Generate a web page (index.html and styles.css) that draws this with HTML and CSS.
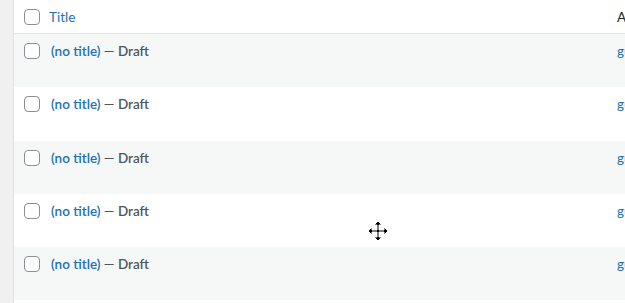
FILE: index.html
```html
<!DOCTYPE html>
<html>
<head>
<meta charset="utf-8">
<link rel="stylesheet" href="styles.css">
</head>
<body>
<div class="page">
  <div class="side"></div>
  <div class="table">
    <div class="row head">
      <div class="cb-col"><span class="cb"></span></div>
      <div class="title-col"><span class="link">Title</span></div>
      <div class="author-col"><span class="author-head">Author</span></div>
    </div>
    <div class="row item alt">
      <div class="cb-col"><span class="cb"></span></div>
      <div class="title-col"><span class="link strong">(no title)</span><span class="state"> — Draft</span></div>
      <div class="author-col"><span class="link">guest</span></div>
    </div>
    <div class="row item">
      <div class="cb-col"><span class="cb"></span></div>
      <div class="title-col"><span class="link strong">(no title)</span><span class="state"> — Draft</span></div>
      <div class="author-col"><span class="link">guest</span></div>
    </div>
    <div class="row item alt">
      <div class="cb-col"><span class="cb"></span></div>
      <div class="title-col"><span class="link strong">(no title)</span><span class="state"> — Draft</span></div>
      <div class="author-col"><span class="link">guest</span></div>
    </div>
    <div class="row item">
      <div class="cb-col"><span class="cb"></span></div>
      <div class="title-col"><span class="link strong">(no title)</span><span class="state"> — Draft</span></div>
      <div class="author-col"><span class="link">guest</span></div>
    </div>
    <div class="row item alt">
      <div class="cb-col"><span class="cb"></span></div>
      <div class="title-col"><span class="link strong">(no title)</span><span class="state"> — Draft</span></div>
      <div class="author-col"><span class="link">guest</span></div>
    </div>
  </div>
</div>
<svg class="cursor" width="22" height="22" viewBox="0 0 22 22">
  <path d="M11 1 L15 5 L12 5 L12 10 L17 10 L17 7 L21 11 L17 15 L17 12 L12 12 L12 17 L15 17 L11 21 L7 17 L10 17 L10 12 L5 12 L5 15 L1 11 L5 7 L5 10 L10 10 L10 5 L7 5 Z" fill="#000" stroke="#fff" stroke-width="1" stroke-linejoin="miter"/>
</svg>
</body>
</html>
```
FILE: styles.css
```css
html, body {
  margin: 0;
  padding: 0;
  background: #fff;
  overflow: hidden;
}
.page {
  display: flex;
  width: 625px;
  height: 303px;
  font-family: "Lato", "Noto Sans", sans-serif;
  font-size: 13.5px;
}
.side {
  width: 13px;
  flex: none;
  background: #f0f0f1;
  border-right: 1px solid #e2e2e4;
}
.table {
  flex: 1;
  display: flex;
  flex-direction: column;
  overflow: hidden;
}
.row {
  display: flex;
  flex: none;
}
.head {
  height: 33px;
  border-bottom: 1px solid #e3e4e6;
  align-items: center;
}
.item {
  height: 53.3px;
  background: #fff;
  align-items: flex-start;
}
.item.alt {
  background: #f6f7f7;
}
.cb-col {
  width: 35px;
  flex: none;
  padding-left: 10px;
  box-sizing: border-box;
  display: flex;
}
.item .cb-col {
  padding-top: 9px;
}
.cb {
  width: 14px;
  height: 14px;
  border: 1px solid #8c8f94;
  border-radius: 4px;
  background: #fff;
  display: block;
}
.title-col {
  flex: 1;
  white-space: nowrap;
}
.item .title-col {
  padding-top: 7px;
  padding-left: 2px;
  line-height: 20px;
}
.head .title-col {
  line-height: 20px;
  margin-top: 1px;
}
.author-col {
  width: 8px;
  flex: none;
  overflow: visible;
  white-space: nowrap;
}
.item .author-col {
  padding-top: 7px;
  line-height: 20px;
}
.head .author-col {
  line-height: 20px;
  margin-top: 1px;
}
.link {
  color: #2271b1;
}
.strong {
  font-weight: 600;
}
.state {
  color: #50575e;
  font-weight: 600;
}
.author-head {
  color: #1d2327;
}
.cursor {
  position: absolute;
  left: 367px;
  top: 220px;
}
```
